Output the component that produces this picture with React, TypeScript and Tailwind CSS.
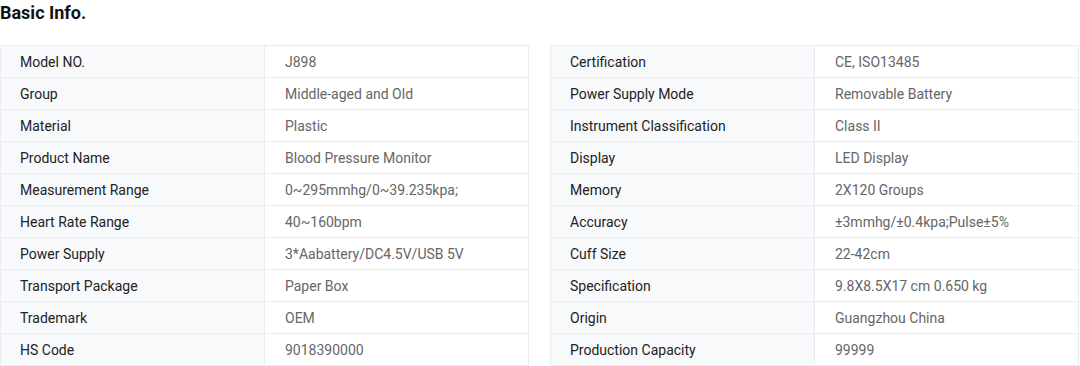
const left: [string, string][] = [
  ["Model NO.", "J898"],
  ["Group", "Middle-aged and Old"],
  ["Material", "Plastic"],
  ["Product Name", "Blood Pressure Monitor"],
  ["Measurement Range", "0~295mmhg/0~39.235kpa;"],
  ["Heart Rate Range", "40~160bpm"],
  ["Power Supply", "3*Aabattery/DC4.5V/USB 5V"],
  ["Transport Package", "Paper Box"],
  ["Trademark", "OEM"],
  ["HS Code", "9018390000"],
];

const right: [string, string][] = [
  ["Certification", "CE, ISO13485"],
  ["Power Supply Mode", "Removable Battery"],
  ["Instrument Classification", "Class II"],
  ["Display", "LED Display"],
  ["Memory", "2X120 Groups"],
  ["Accuracy", "±3mmhg/±0.4kpa;Pulse±5%"],
  ["Cuff Size", "22-42cm"],
  ["Specification", "9.8X8.5X17 cm 0.650 kg"],
  ["Origin", "Guangzhou China"],
  ["Production Capacity", "99999"],
];

function Table({ rows }: { rows: [string, string][] }) {
  return (
    <div className="w-[529px] border-t border-l border-r border-[#e9ecf2]">
      {rows.map(([k, v]) => (
        <div key={k} className="flex h-[32px] border-b border-[#e9ecf2]">
          <div className="w-[264px] shrink-0 bg-[#f8f9fb] border-r border-[#e9ecf2] pl-[19px] pt-[2px] flex items-center text-[14px] text-[#222222]">
            {k}
          </div>
          <div className="flex-1 pl-[20px] pt-[2px] flex items-center text-[14px] text-[#666666]">
            {v}
          </div>
        </div>
      ))}
    </div>
  );
}

export default function App() {
  return (
    <div className="w-[1080px] h-[366px] bg-white overflow-hidden" style={{ fontFamily: "Roboto, 'Liberation Sans', sans-serif" }}>
      <h2 className="h-[27px] pt-[2px] text-[18px] font-bold leading-[22px] text-[#111111]">Basic Info.</h2>
      <div className="mt-[18px] flex gap-[21px]">
        <Table rows={left} />
        <Table rows={right} />
      </div>
    </div>
  );
}
